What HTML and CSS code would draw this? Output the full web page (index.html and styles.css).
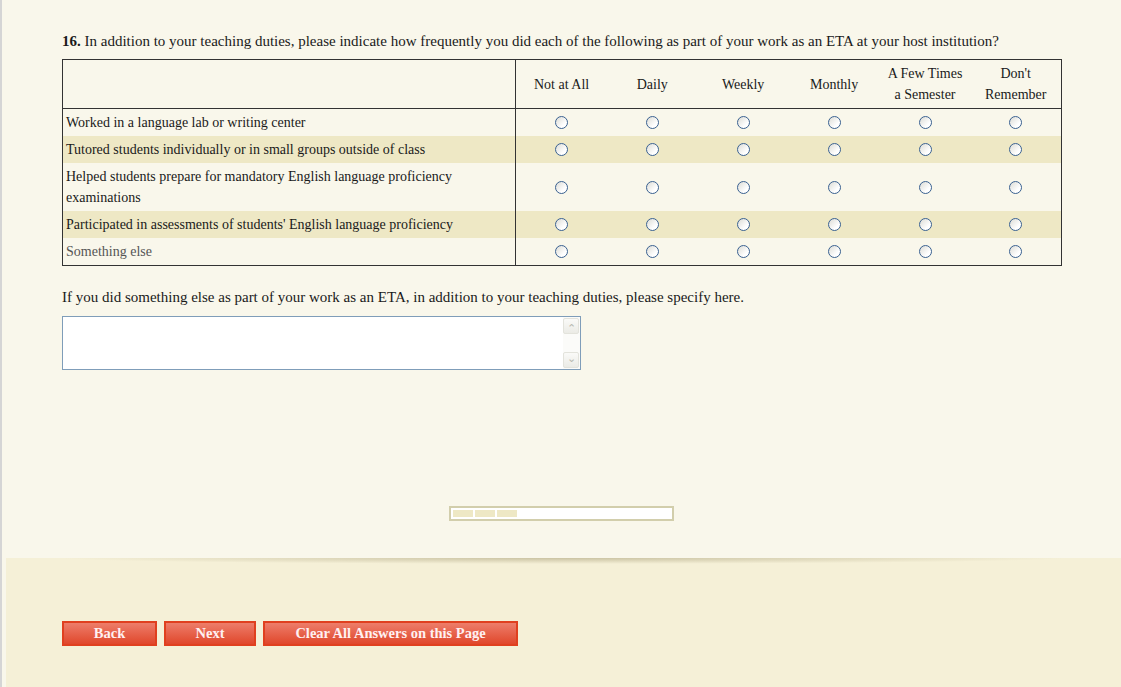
FILE: index.html
```html
<!DOCTYPE html>
<html lang="en">
<head>
  <meta charset="UTF-8" />
  <title>Survey - Question 16</title>
  <link rel="stylesheet" href="styles.css">
</head>
<body>
  <div class="edge"></div>
  <div class="page">
    <div class="content">
      <p class="question"><b>16.</b> In addition to your teaching duties, please indicate how frequently you did each of the following as part of your work as an ETA at your host institution?</p>

      <table class="grid">
        <tr class="head">
          <th class="label"></th>
          <th>Not at All</th>
          <th>Daily</th>
          <th>Weekly</th>
          <th>Monthly</th>
          <th>A Few Times<br>a Semester</th>
          <th>Don't<br>Remember</th>
        </tr>
        <tr>
          <td class="label">Worked in a language lab or writing center</td>
          <td><input type="radio" name="q1"></td><td><input type="radio" name="q1"></td><td><input type="radio" name="q1"></td>
          <td><input type="radio" name="q1"></td><td><input type="radio" name="q1"></td><td><input type="radio" name="q1"></td>
        </tr>
        <tr class="alt">
          <td class="label">Tutored students individually or in small groups outside of class</td>
          <td><input type="radio" name="q2"></td><td><input type="radio" name="q2"></td><td><input type="radio" name="q2"></td>
          <td><input type="radio" name="q2"></td><td><input type="radio" name="q2"></td><td><input type="radio" name="q2"></td>
        </tr>
        <tr>
          <td class="label">Helped students prepare for mandatory English language proficiency examinations</td>
          <td><input type="radio" name="q3"></td><td><input type="radio" name="q3"></td><td><input type="radio" name="q3"></td>
          <td><input type="radio" name="q3"></td><td><input type="radio" name="q3"></td><td><input type="radio" name="q3"></td>
        </tr>
        <tr class="alt">
          <td class="label">Participated in assessments of students' English language proficiency</td>
          <td><input type="radio" name="q4"></td><td><input type="radio" name="q4"></td><td><input type="radio" name="q4"></td>
          <td><input type="radio" name="q4"></td><td><input type="radio" name="q4"></td><td><input type="radio" name="q4"></td>
        </tr>
        <tr>
          <td class="label other">Something else</td>
          <td><input type="radio" name="q5"></td><td><input type="radio" name="q5"></td><td><input type="radio" name="q5"></td>
          <td><input type="radio" name="q5"></td><td><input type="radio" name="q5"></td><td><input type="radio" name="q5"></td>
        </tr>
      </table>

      <p class="followup">If you did something else as part of your work as an ETA, in addition to your teaching duties, please specify here.</p>
      <div class="textbox">
        <textarea></textarea>
        <div class="scroll">
          <span class="arrow">&#8963;</span>
          <span class="arrow down">&#8964;</span>
        </div>
      </div>
    </div>

    <div class="progress">
      <span class="seg"></span><span class="seg"></span><span class="seg"></span>
    </div>

    <div class="footer">
      <div class="shade"></div>
      <div class="buttons">
        <button class="btn back">Back</button>
        <button class="btn next">Next</button>
        <button class="btn clear">Clear All Answers on this Page</button>
      </div>
    </div>
  </div>
</body>
</html>
```

FILE: styles.css
```css
* { box-sizing: border-box; }
html, body { height: 100%; }
body {
  margin: 0;
  display: flex;
  font-family: 'Liberation Serif', 'Times New Roman', serif;
  color: #1a1a1a;
  background: #f9f7eb;
  overflow: hidden;
}
.edge {
  width: 2px;
  background: #d5d5d5;
  flex-shrink: 0;
}
.page {
  flex: 1;
  display: flex;
  flex-direction: column;
  background: #f9f7eb;
}
.content {
  padding: 32px 0 0 60px;
}
.question {
  margin: 0 0 9px;
  font-size: 15px;
  line-height: 18px;
}
.grid {
  width: 1000px;
  border-collapse: collapse;
  border: 1px solid #333;
  font-size: 14px;
}
.grid th, .grid td {
  padding: 3px 4px;
  line-height: 21px;
  text-align: center;
  vertical-align: middle;
  font-weight: normal;
}
.grid th { width: 91px; }
.grid .label {
  width: 454px;
  padding-left: 3px;
  text-align: left;
  border-right: 1px solid #333;
}
.grid .head th { border-bottom: 1px solid #333; }
.grid .alt td { background: #eee8c5; }
.grid .other { color: #555; }

input[type=radio] {
  appearance: none;
  -webkit-appearance: none;
  display: block;
  margin: 0 auto;
  width: 13px;
  height: 13px;
  border: 1px solid #3a6190;
  border-radius: 50%;
  background: linear-gradient(135deg, #dcdcd6, #ffffff 70%);
}

.followup {
  margin: 22px 0 10px;
  font-size: 15px;
  line-height: 18px;
}
.textbox {
  width: 519px;
  height: 54px;
  display: flex;
  border: 1px solid #7f9db9;
  background: #fff;
}
.textbox textarea {
  flex: 1;
  border: none;
  outline: none;
  resize: none;
  background: transparent;
}
.scroll {
  width: 17px;
  padding: 1px 1px 1px 0;
  display: flex;
  flex-direction: column;
  justify-content: space-between;
  background: #fbfbf9;
}
.arrow {
  height: 16px;
  border: 1px solid #e3e3dc;
  border-radius: 2px;
  background: linear-gradient(#fafaf8, #ebebe6);
  color: #b8b8b0;
  font-size: 11px;
  line-height: 18px;
  text-align: center;
}
.arrow.down { line-height: 10px; }

.progress {
  align-self: center;
  margin: 136px 0 37px;
  width: 225px;
  height: 15px;
  border: 2px solid #d2ceac;
  background: #fff;
  display: flex;
  gap: 2px;
  padding: 2px;
}
.seg {
  width: 20px;
  height: 7px;
  background: #eee8c5;
}

.footer {
  flex: 1;
  margin-left: 4px;
  background: #f5f0d7;
}
.shade {
  height: 6px;
  background: radial-gradient(ellipse 45% 100% at 50% 0, rgba(160, 150, 110, 0.5), rgba(160, 150, 110, 0) 100%);
}
.buttons {
  display: flex;
  gap: 7px;
  padding: 57px 0 0 56px;
}
.btn {
  height: 25px;
  border: 2px solid #e0401f;
  background: linear-gradient(#ed7d6a, #e0472b);
  color: #fff0f2;
  font-family: 'Liberation Serif', 'Times New Roman', serif;
  font-weight: bold;
  font-size: 14.5px;
  line-height: 19px;
  padding: 0;
  cursor: pointer;
}
.back { width: 95px; }
.next { width: 92px; }
.clear { width: 255px; }
```
